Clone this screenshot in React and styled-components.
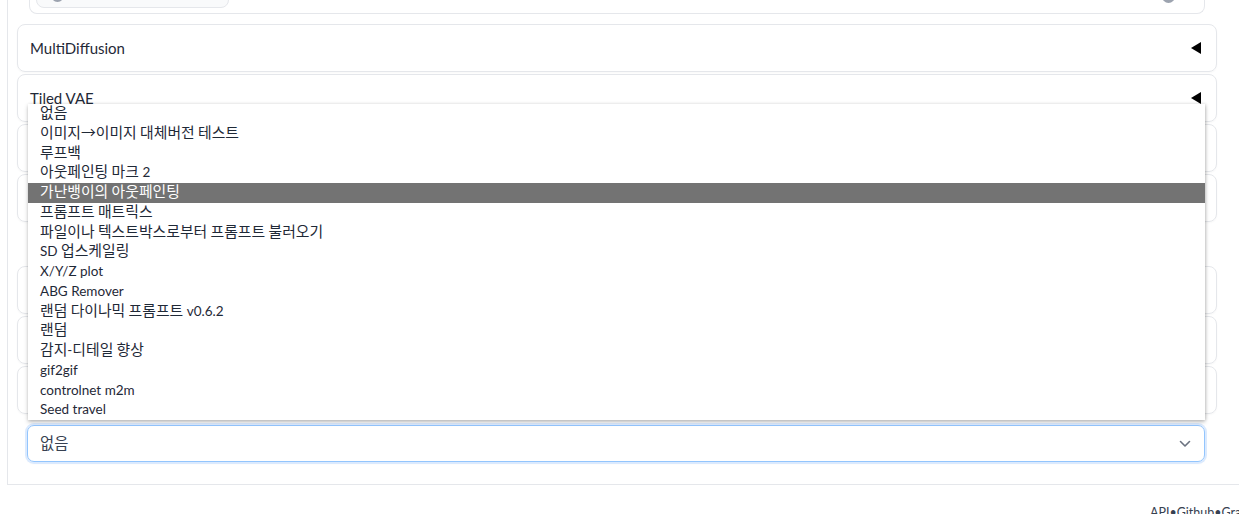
import React from "react";
import styled, { createGlobalStyle } from "styled-components";

const Global = createGlobalStyle`
  html, body { margin: 0; padding: 0; background: #fff; overflow: hidden; }
  body { font-family: Lato, "Noto Sans CJK KR", sans-serif; color: #1f2937; }
`;

const Page = styled.div`
  margin-top: -27px;
  width: 1260px;
`;

const Panel = styled.div`
  margin-left: 7px;
  width: 1240px;
  border: 1px solid #e5e7eb;
  padding: 0 0 22px 9px;
  display: flex;
  flex-direction: column;
  background: #fff;
`;

const TopBlock = styled.div`
  width: 1176px;
  margin-left: 12px;
  height: 40px;
  border: 1px solid #e5e7eb;
  border-top: none;
  border-radius: 0 0 8px 8px;
  box-sizing: border-box;
  display: flex;
  align-items: flex-end;
  justify-content: space-between;
  padding: 0 29px 5px 6px;
`;

const Pill = styled.div`
  width: 193px;
  height: 30px;
  box-sizing: border-box;
  background: #f9fafb;
  border: 1px solid #e5e7eb;
  border-radius: 8px;
  display: flex;
  align-items: flex-end;
  padding: 0 0 5px 14px;
`;

const Knob = styled.span`
  width: 13px;
  height: 13px;
  border-radius: 50%;
  background: #9ca3af;
  margin-bottom: ${(p) => p.$mb || 0}px;
`;

const List = styled.div`
  margin-top: 10px;
  display: flex;
  flex-direction: column;
  gap: 2px;
  width: 1200px;
`;

const Accordion = styled.div`
  height: 48px;
  box-sizing: border-box;
  border: 1px solid #e5e7eb;
  border-radius: 8px;
  display: flex;
  align-items: center;
  justify-content: space-between;
  padding: 0 15px 0 12px;
  font-size: 15px;
  color: #1f2937;
  box-shadow: 0 1px 2px rgba(0, 0, 0, 0.03);
`;

const Arrow = styled.span`
  width: 0;
  height: 0;
  border-top: 6px solid transparent;
  border-bottom: 6px solid transparent;
  border-right: 10px solid #000;
`;

const Spacer = styled.div`
  height: 40px;
`;

const SelectWrap = styled.div`
  position: relative;
  margin: 11px 0 0 10px;
  width: 1178px;
`;

const Select = styled.div`
  height: 37px;
  box-sizing: border-box;
  border: 1px solid #93c5fd;
  border-radius: 7px;
  box-shadow: 0 0 0 2px #dbeafe, 0 1px 3px rgba(0,0,0,0.08);
  display: flex;
  align-items: center;
  justify-content: space-between;
  padding: 0 13px 0 12px;
  font-size: 14px;
  color: #374151;
`;

const Menu = styled.ul`
  position: absolute;
  left: 1px;
  right: 0;
  bottom: calc(100% + 5px);
  margin: 0;
  padding: 0;
  list-style: none;
  background: #fff;
  box-shadow: 0 2px 4px rgba(0, 0, 0, 0.25), 1px 0 3px rgba(0,0,0,0.12);
  z-index: 5;
`;

const Item = styled.li`
  height: 19.75px;
  line-height: 19.75px;
  padding-left: 12px;
  font-size: 13.5px;
  white-space: nowrap;
  color: ${(p) => (p.$active ? "#fff" : "#1f2937")};
  background: ${(p) => (p.$active ? "#737373" : "transparent")};
`;

const Hangul = styled.span`
  font-family: "Noto Sans CJK KR", sans-serif;
  font-size: 1.1em;
  line-height: 1;
`;

const Footer = styled.div`
  margin-top: 20px;
  padding-left: 1150px;
  font-size: 12.5px;
  color: #374151;
  white-space: nowrap;
`;

const HANGUL_RUN = /([\uAC00-\uD7A3\u3131-\u318E→][\uAC00-\uD7A3\u3131-\u318E→ ]*[\uAC00-\uD7A3\u3131-\u318E→]|[\uAC00-\uD7A3\u3131-\u318E→])/;

const Mixed = ({ text }) =>
  text.split(HANGUL_RUN).map((part, i) =>
    i % 2 === 1 ? <Hangul key={i}>{part}</Hangul> : part
  );

const items = [
  "없음",
  "이미지→이미지 대체버전 테스트",
  "루프백",
  "아웃페인팅 마크 2",
  "가난뱅이의 아웃페인팅",
  "프롬프트 매트릭스",
  "파일이나 텍스트박스로부터 프롬프트 불러오기",
  "SD 업스케일링",
  "X/Y/Z plot",
  "ABG Remover",
  "랜덤 다이나믹 프롬프트 v0.6.2",
  "랜덤",
  "감지-디테일 향상",
  "gif2gif",
  "controlnet m2m",
  "Seed travel",
];

const Chevron = () => (
  <svg width="12" height="8" viewBox="0 0 12 8" fill="none">
    <path d="M1.5 1.5 L6 6 L10.5 1.5" stroke="#6b7280" strokeWidth="1.6" strokeLinecap="round" strokeLinejoin="round" />
  </svg>
);

export default function App() {
  return (
    <>
      <Global />
      <Page>
        <Panel>
          <TopBlock>
            <Pill>
              <Knob />
            </Pill>
            <Knob $mb={5} />
          </TopBlock>
          <List>
            <Accordion>MultiDiffusion<Arrow /></Accordion>
            <Accordion>Tiled VAE<Arrow /></Accordion>
            <Accordion>ControlNet<Arrow /></Accordion>
            <Accordion>Dynamic Prompts<Arrow /></Accordion>
            <Spacer />
            <Accordion>Additional Networks<Arrow /></Accordion>
            <Accordion>Aesthetic Gradients<Arrow /></Accordion>
            <Accordion>Latent Couple<Arrow /></Accordion>
          </List>
          <SelectWrap>
            <Menu>
              {items.map((t, i) => (
                <Item key={t} $active={i === 4}><Mixed text={t} /></Item>
              ))}
            </Menu>
            <Select>
              <span><Hangul>없음</Hangul></span>
              <Chevron />
            </Select>
          </SelectWrap>
        </Panel>
        <Footer>API•Github•Gradio</Footer>
      </Page>
    </>
  );
}
